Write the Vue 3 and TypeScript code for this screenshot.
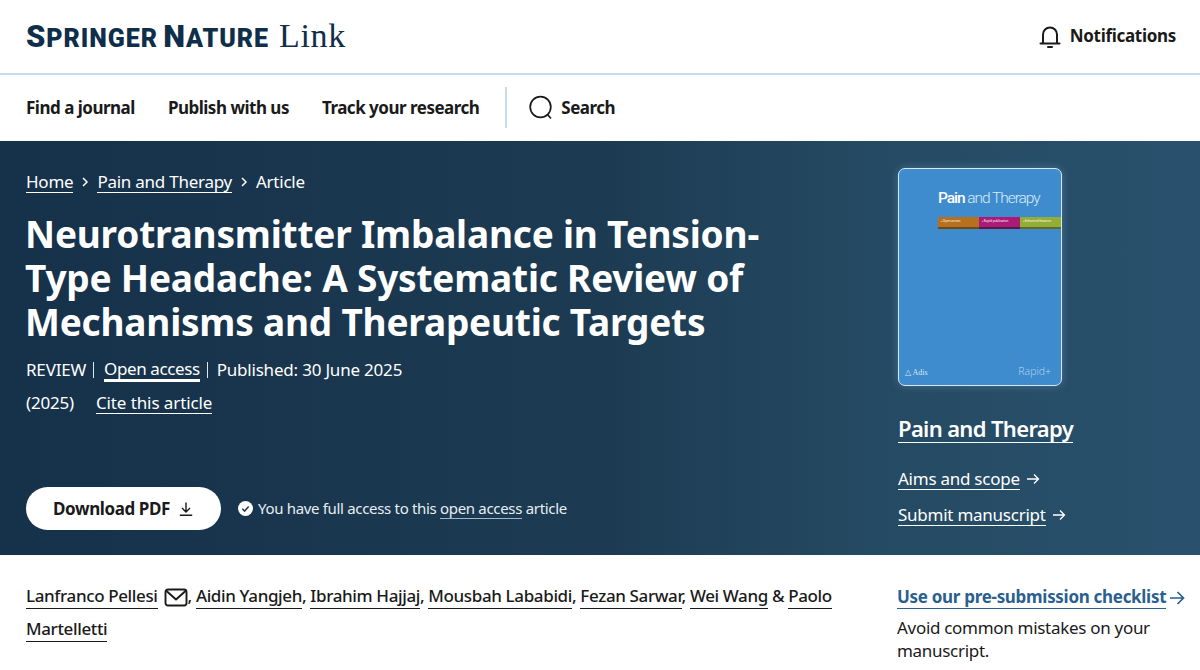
<template>
  <div class="page">
    <header class="top">
      <div class="logo">
        <span class="logo-sn"><span class="cap">S</span>PRINGER <span class="cap">N</span>ATURE</span>
        <span class="logo-link">Link</span>
      </div>
      <div class="notif">
        <svg width="24" height="24" viewBox="0 0 24 24" fill="none" stroke="#1a1a1a" stroke-width="2" stroke-linecap="round">
          <path d="M2.500 19.500h19M5 19.500v-9a7 7 0 0 1 14 0v9" />
          <path d="M10 23h4" stroke-width="2" />
        </svg>
        <span>Notifications</span>
      </div>
    </header>

    <nav class="nav">
      <a v-for="item in navItems" :key="item">{{ item }}</a>
      <div class="nav-search">
        <svg width="26" height="26" viewBox="0 0 26 26" fill="none" stroke="#1a1a1a" stroke-width="1.700">
          <circle cx="12.500" cy="12" r="10.300" />
          <path d="M19.500 19.500l3.500 4" />
        </svg>
        <span>Search</span>
      </div>
    </nav>

    <section class="hero">
      <div class="hero-main">
        <div class="crumbs">
          <a>Home</a>
          <svg class="chev" width="8" height="10" viewBox="0 0 8 10" fill="none" stroke="#fff" stroke-width="1.500"><path d="M2 1l4 4-4 4" /></svg>
          <a>Pain and Therapy</a>
          <svg class="chev" width="8" height="10" viewBox="0 0 8 10" fill="none" stroke="#fff" stroke-width="1.500"><path d="M2 1l4 4-4 4" /></svg>
          <span>Article</span>
        </div>
        <h1>Neurotransmitter Imbalance in Tension-<br />Type Headache: A Systematic Review of<br />Mechanisms and Therapeutic Targets</h1>
        <div class="meta">
          <span>REVIEW</span>
          <i class="sep"></i>
          <a class="open">Open access</a>
          <i class="sep"></i>
          <span>Published: 30 June 2025</span>
        </div>
        <div class="meta second">
          <span>(2025)</span>
          <a class="cite">Cite this article</a>
        </div>
        <div class="actions">
          <button class="pdf">
            <span>Download PDF</span>
            <svg width="16" height="16" viewBox="0 0 16 16" fill="none" stroke="#1a1a1a" stroke-width="1.400">
              <path d="M8 1.500v9M4 7l4 4 4-4M1.800 14.300h12.400" />
            </svg>
          </button>
          <svg class="check" width="15" height="15" viewBox="0 0 15 15">
            <circle cx="7.500" cy="7.500" r="7.500" fill="#fff" />
            <path d="M4.300 7.800l2.300 2.300 4.100-4.600" fill="none" stroke="#1d3c54" stroke-width="1.500" />
          </svg>
          <span class="access">You have full access to this <a>open access</a> article</span>
        </div>
      </div>

      <aside class="hero-side">
        <div class="cover">
          <div class="cover-title"><b>Pain</b> and Therapy</div>
          <div class="cover-bars">
            <span class="orange">▪ Open access</span>
            <span class="magenta">▪ Rapid publication</span>
            <span class="green">▪ Enhanced features</span>
          </div>
          <div class="cover-foot">
            <span class="adis">△ Adis</span>
            <span class="rapid">Rapid+</span>
          </div>
        </div>
        <a class="journal">Pain and Therapy</a>
        <div class="side-link">
          <a>Aims and scope</a>
          <svg width="14" height="12" viewBox="0 0 14 12" fill="none" stroke="#fff" stroke-width="1.300"><path d="M1 6h11.500M8 1.500L12.500 6 8 10.500" /></svg>
        </div>
        <div class="side-link">
          <a>Submit manuscript</a>
          <svg width="14" height="12" viewBox="0 0 14 12" fill="none" stroke="#fff" stroke-width="1.300"><path d="M1 6h11.500M8 1.500L12.500 6 8 10.500" /></svg>
        </div>
      </aside>
    </section>

    <section class="below">
      <div class="authors">
        <a>Lanfranco Pellesi</a>
        <svg class="mail" width="24" height="19" viewBox="0 0 24 19" fill="none" stroke="#1a1a1a" stroke-width="1.900" stroke-linejoin="round">
          <rect x="1.500" y="1.500" width="21" height="16" rx="2.500" />
          <path d="M2.500 3l9.500 8.500L21.500 3" />
        </svg><span>, </span>
        <template v-for="(name, i) in authors" :key="name">
          <a>{{ name }}</a><span>{{ i < authors.length - 1 ? ", " : " " }}</span>
        </template>
        <span>&amp; </span><a>Paolo</a><br /><a>Martelletti</a>
      </div>
      <div class="check-box">
        <div class="check-link">
          <a>Use our pre-submission checklist</a>
          <svg width="16" height="14" viewBox="0 0 16 14" fill="none" stroke="#2a5f8f" stroke-width="1.700"><path d="M1 7h13.500M8.500 1l6 6-6 6" /></svg>
        </div>
        <p>Avoid common mistakes on your manuscript.</p>
      </div>
    </section>
  </div>
</template>

<script setup lang="ts">
const navItems: string[] = ["Find a journal", "Publish with us", "Track your research"];
const authors: string[] = ["Aidin Yangjeh", "Ibrahim Hajjaj", "Mousbah Lababidi", "Fezan Sarwar", "Wei Wang"];
</script>

<style>
html, body {
  margin: 0;
  background: #fff;
  overflow: hidden;
}
</style>

<style scoped>
.page {
  width: 1200px;
  height: 670px;
  overflow: hidden;
  font-family: "Noto Sans", "Open Sans", sans-serif;
  color: #1a1a1a;
}

.top {
  height: 71px;
  padding: 0 24px 2px 26px;
  border-bottom: 2px solid #c9d9ea;
  display: flex;
  align-items: center;
  justify-content: space-between;
}

.logo {
  display: flex;
  align-items: baseline;
  gap: 10px;
  color: #0f2e4a;
}

.logo-sn {
  font-family: "Roboto", "Noto Sans", sans-serif;
  font-weight: 900;
  font-size: 25px;
  letter-spacing: 0.95px;
  word-spacing: -2px;
  white-space: nowrap;
}

.logo-sn .cap {
  font-size: 31px;
}

.logo-link {
  font-family: "Liberation Serif", serif;
  font-size: 34px;
  letter-spacing: 0.7px;
}

.notif {
  display: flex;
  align-items: center;
  gap: 8px;
  font-size: 17px;
  font-weight: 700;
  letter-spacing: -0.3px;
}

.nav {
  height: 65px;
  display: flex;
  align-items: center;
  padding-left: 26px;
  gap: 33px;
  font-size: 17px;
  font-weight: 700;
  letter-spacing: -0.5px;
}

.nav-search {
  display: flex;
  align-items: center;
  gap: 7px;
  height: 41px;
  border-left: 2px solid #c9d9ea;
  padding-left: 21px;
  margin-left: -7px;
}

.hero {
  margin-top: 1px;
  height: 414px;
  background: linear-gradient(90deg, #16314a 0%, #1c3b52 50%, #254a63 73%, #29516d 100%);
  color: #fff;
  display: flex;
  justify-content: space-between;
  box-sizing: border-box;
  padding: 0 138px 0 26px;
}

.hero-main {
  width: 800px;
}

.crumbs {
  display: flex;
  align-items: center;
  gap: 8px;
  margin-top: 28px;
  font-size: 17px;
  line-height: 26px;
  letter-spacing: -0.25px;
}

.crumbs a,
.cite,
.side-link a,
.journal {
  border-bottom: 1px solid #fff;
}

.crumbs a {
  line-height: 21px;
}

h1 {
  margin: 17px 0 0 -1px;
  font-size: 37px;
  line-height: 44px;
  font-weight: 700;
  letter-spacing: -0.2px;
  white-space: nowrap;
}

.meta {
  display: flex;
  align-items: center;
  margin-top: 14px;
  font-size: 17px;
  line-height: 24px;
  letter-spacing: -0.2px;
}

.sep {
  width: 1px;
  height: 16px;
  background: #dfe7ee;
  margin: 0 9px 0 7px;
}

.open {
  border-bottom: 3px solid #fff;
  line-height: 21px;
  margin-left: 1px;
  letter-spacing: -0.4px;
}

.second {
  margin-top: 9px;
}

.cite {
  margin-left: 22px;
  line-height: 21px;
  letter-spacing: -0.1px;
}

.actions {
  display: flex;
  align-items: center;
  margin-top: 72px;
}

.pdf {
  width: 195px;
  height: 43px;
  border: none;
  border-radius: 22px;
  background: #fff;
  color: #1a1a1a;
  font: 700 17px "Noto Sans", sans-serif;
  letter-spacing: -0.4px;
  display: flex;
  align-items: center;
  justify-content: center;
  gap: 8px;
  padding: 0;
}

.check {
  margin: 0 5px 0 17px;
}

.access {
  font-size: 15px;
  letter-spacing: -0.32px;
  color: #e8eef3;
  margin-bottom: 2px;
}

.access a {
  border-bottom: 1px solid #9db6cb;
}

.hero-side {
  width: 164px;
  flex: none;
  padding-top: 27px;
}

.cover {
  width: 164px;
  height: 218px;
  box-sizing: border-box;
  background: #3e8bcd;
  border: 1px solid #d6e8f5;
  border-radius: 7px;
  box-shadow: 0 0 8px rgba(160, 205, 235, 0.3);
  display: flex;
  flex-direction: column;
  padding-left: 39px;
  position: relative;
}

.cover-title {
  margin-top: 18px;
  font-family: "Roboto", sans-serif;
  font-weight: 300;
  font-size: 15.500px;
  line-height: 22px;
  letter-spacing: -1.050px;
  color: #d6ebf8;
  white-space: nowrap;
}

.cover-title b {
  font-weight: 500;
  color: #fff;
}

.cover-bars {
  display: flex;
  margin-top: 8px;
  height: 12px;
}

.cover-bars span {
  width: 41px;
  flex: none;
  font-size: 3px;
  line-height: 9px;
  padding-left: 3px;
  box-sizing: border-box;
  white-space: nowrap;
  overflow: hidden;
  color: #fff;
}

.orange { background: #b8701e; border-bottom: 2px solid #6e4a18; }
.magenta { background: #ac1a78; border-bottom: 2px solid #5c1845; }
.green { background: #93ad35; border-bottom: 2px solid #5e6c26; }

.cover-foot {
  position: absolute;
  left: 6px;
  right: 10px;
  bottom: 7px;
  display: flex;
  justify-content: space-between;
  align-items: flex-end;
}

.adis {
  font-family: "Liberation Serif", serif;
  font-size: 8px;
  color: #d7e8f5;
  margin-bottom: 1px;
}

.rapid {
  font-family: "Open Sans", sans-serif;
  font-weight: 300;
  font-size: 10.500px;
  color: #b7d9f0;
}

.journal {
  display: inline-block;
  margin-top: 28px;
  font-size: 22px;
  line-height: 28px;
  font-weight: 600;
  letter-spacing: -0.65px;
  white-space: nowrap;
}

.side-link {
  display: flex;
  align-items: center;
  gap: 6px;
  font-size: 17px;
  letter-spacing: -0.25px;
  margin-top: 14px;
  white-space: nowrap;
}

.side-link svg {
  flex: none;
}

.journal + .side-link {
  margin-top: 25px;
}

.side-link a {
  line-height: 21px;
}

.below {
  display: flex;
  justify-content: space-between;
  padding: 24px 0 0 26px;
}

.authors {
  width: 840px;
  font-size: 17px;
  font-weight: 500;
  line-height: 33px;
  letter-spacing: -0.37px;
  white-space: nowrap;
}

.authors a {
  border-bottom: 1px solid #1a1a1a;
  padding-bottom: 1px;
}

.mail {
  vertical-align: -5px;
  margin-left: 6px;
}

.check-box {
  width: 303px;
  flex: none;
  font-size: 17px;
}

.check-link {
  display: flex;
  align-items: center;
  gap: 3px;
  margin-top: 7px;
  color: #2a5f8f;
  font-weight: 700;
  letter-spacing: -0.3px;
  line-height: 26px;
  white-space: nowrap;
}

.check-link svg {
  flex: none;
}

.check-link a {
  border-bottom: 1px solid #2a5f8f;
  line-height: 22px;
}

.check-box p {
  margin: 7px 0 0;
  width: 281px;
  line-height: 23px;
  letter-spacing: -0.3px;
}
</style>
